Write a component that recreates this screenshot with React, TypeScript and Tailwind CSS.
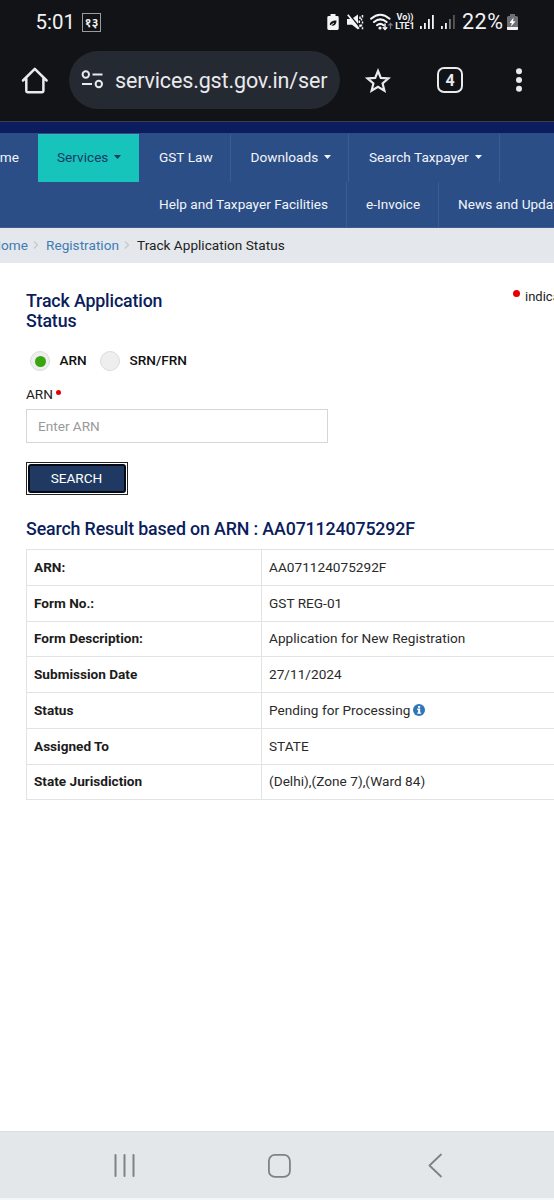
import type { ReactNode } from "react";

function StatusBar() {
  return (
    <div className="flex h-[44px] items-center text-[#f1f2f4]">
      <span className="ml-[35.500px] w-[46.500px] text-[20.5px] leading-6 whitespace-nowrap">5:01</span>
      <span className="flex h-[19px] w-[19px] items-center justify-center border border-[#9a9b9e] font-['Noto_Sans',sans-serif] text-[13px] leading-none font-semibold">
        १३
      </span>
      <svg className="ml-[226px] h-[20px] w-[12px]" viewBox="0 0 12 20" fill="none">
        <path d="M3.500 2h5v2h1.800q1.400 0 1.400 1.400v11.200q0 1.400-1.400 1.400H1.700q-1.400 0-1.400-1.400V5.400q0-1.400 1.400-1.400h1.800z" fill="#f4f4f5" />
        <path d="M3 13.500C2.300 10 5 8.500 9.500 8.500C9.500 13 7 14.500 4 13.200L7 10.800" fill="#111418" />
        <path d="M2.500 14.500L7 11" stroke="#f4f4f5" strokeWidth=".8" />
      </svg>
      <svg className="ml-[8px] h-[20px] w-[17px]" viewBox="0 0 17 20" fill="none">
        <path d="M0 7h4.500L11 2.500v15L5 12.800H0z" fill="#f4f4f5" />
        <path d="M1.500 1.500l11 13.500" stroke="#111418" strokeWidth="1.500" />
        <path d="M.8 2.800l11.200 14" stroke="#f4f4f5" strokeWidth="1.700" />
        <path d="M13 4.500v2.500M12.300 8.500v2.500M13 12.500v2.500M15.500 3v2.500M14.500 6.500v2M15.500 9.500v2M14.500 12.500v2M15.500 15.300v2" stroke="#f4f4f5" strokeWidth="1.500" />
      </svg>
      <svg className="ml-[6px] h-[20px] w-[23px]" viewBox="0 0 23 20" fill="none" stroke="#f4f4f5">
        <path d="M1 6.700q9.300-8 18.600 0M4 10q6.300-5.300 12.600 0M7 13.200q3.300-2.700 6.500 0" strokeWidth="2" strokeLinecap="round" />
        <circle cx="10" cy="16" r="1.600" fill="#f4f4f5" stroke="none" />
        <path d="M15 11.500v6M12.800 15.200l2.200 2.300 2.200-2.300" strokeWidth="1.500" />
        <path d="M20.500 17v-5.500M18.500 13.500l2-2.200 2 2.200" stroke="#77797c" strokeWidth="1.200" />
      </svg>
      <div className="ml-[2px] flex w-[20px] flex-col items-center text-[9px] leading-[9.500px] font-bold whitespace-nowrap">
        <span>Vo))</span>
        <span className="tracking-[-0.1px]">LTE1</span>
      </div>
      <svg className="ml-[5px] h-[20px] w-[15px]" viewBox="0 0 15 20" fill="#f4f4f5">
        <rect x="0" y="14" width="1.800" height="3" />
        <rect x="4" y="11" width="1.800" height="6" />
        <rect x="8" y="7" width="1.800" height="10" />
        <rect x="12" y="3" width="1.800" height="14" />
      </svg>
      <svg className="ml-[6px] h-[20px] w-[15px]" viewBox="0 0 15 20" fill="#f4f4f5">
        <rect x="0" y="14" width="1.800" height="3" />
        <rect x="4" y="11" width="1.800" height="6" />
        <rect x="8" y="7" width="1.800" height="10" fill="#77797c" />
        <rect x="12" y="3" width="1.800" height="14" fill="#54565a" />
      </svg>
      <span className="ml-[6px] w-[45px] text-[21.500px] leading-6 tracking-[0.500px] whitespace-nowrap">22%</span>
      <svg className="h-[20px] w-[11px]" viewBox="0 0 11 20">
        <path d="M3 2h5v2h1.500q1.500 0 1.500 1.500V17q0 1-1 1H1q-1 0-1-1V5.500Q0 4 1.500 4H3z" fill="#6e7073" />
        <path d="M0 15h11V17q0 1-1 1H1q-1 0-1-1z" fill="#f4f4f5" />
        <path d="M6.500 5.500L2.500 11h2.300L4 14.500 8.500 9.300H6z" fill="#fff" />
      </svg>
    </div>
  );
}

function BrowserBar() {
  return (
    <div className="flex h-[77px] items-start pt-[7px] text-[#e9eaed]">
      <svg className="mt-[14px] ml-[20px] h-[30px] w-[30px]" viewBox="0 0 30 30" fill="none" stroke="#e9eaed" strokeWidth="2.500" strokeLinejoin="round" strokeLinecap="round">
        <path d="M3 15.500L14.800 3.800 26.600 15.500M6.300 13.500V26q0 1.200 1.200 1.200h14.700q1.200 0 1.200-1.200V13.500" />
      </svg>
      <div className="ml-[19px] flex h-[58px] w-[271px] items-center rounded-full bg-[#252932]">
        <svg className="ml-[12px] h-[22px] w-[24px] shrink-0" viewBox="0 0 24 22" fill="none" stroke="#e9eaed" strokeWidth="2">
          <circle cx="4.800" cy="5.500" r="3.200" />
          <path d="M11.500 5.500h10M1 15h10" />
          <circle cx="17.800" cy="15" r="3.200" />
        </svg>
        <span className="mt-[2px] ml-[10px] text-[21.500px] leading-8 tracking-[-0.150px] whitespace-nowrap">services.gst.gov.in/ser</span>
      </div>
      <svg className="mt-[15px] ml-[25px] h-[30px] w-[28px]" viewBox="0 0 28 30" fill="none" stroke="#e9eaed" strokeWidth="2.200">
        <path d="M13 5l2.800 6.900 7.500.6-5.700 4.900 1.800 7.300-6.400-3.900-6.400 3.900 1.800-7.300-5.700-4.900 7.500-.6z" />
      </svg>
      <span className="mt-[16px] ml-[44px] flex h-[26px] w-[26px] items-center justify-center rounded-[7px] border-2 border-[#e9eaed] pt-px text-[16px] leading-none font-bold">4</span>
      <svg className="mt-[14px] ml-[52px] h-[30px] w-[8px]" viewBox="0 0 8 30" fill="#e9eaed">
        <circle cx="4" cy="6.300" r="3" />
        <circle cx="4" cy="15" r="3" />
        <circle cx="4" cy="23.700" r="3" />
      </svg>
    </div>
  );
}

function Caret() {
  return (
    <svg className="ml-[6px] h-[4px] w-[7px] shrink-0" viewBox="0 0 7 4" fill="currentColor">
      <path d="M0 0h7L3.500 4z" />
    </svg>
  );
}

function NavItem({ className, caret, children }: { className: string; caret?: boolean; children: ReactNode }) {
  return (
    <div className={`flex shrink-0 items-center whitespace-nowrap ${className}`}>
      <span>{children}</span>
      {caret && <Caret />}
    </div>
  );
}

function MainNav() {
  return (
    <nav className="h-[95px] shrink-0 overflow-hidden border-b border-[#3d5c92] bg-[#2c4e86] text-[13.600px] leading-5 tracking-[0.020px] text-[#f2f5fa]">
      <div className="flex h-[49px] pt-px">
        <div className="flex w-[38px] shrink-0 items-center justify-end overflow-hidden pr-[19px] pb-[2px]">Home</div>
        <NavItem className="w-[101px] border-t border-[#3cb9bd] bg-[#17c4bb] pb-[3px] pl-[19px] text-[#123a63]" caret>Services</NavItem>
        <NavItem className="w-[92px] border-r border-[#3d5c92] pb-[2px] pl-[20px]">GST Law</NavItem>
        <NavItem className="w-[118px] border-r border-[#3d5c92] pb-[2px] pl-[19.500px]" caret>Downloads</NavItem>
        <NavItem className="w-[151px] border-r border-[#3d5c92] pb-[2px] pl-[20px]" caret>Search Taxpayer</NavItem>
      </div>
      <div className="flex h-[45px] pl-[139px]">
        <NavItem className="w-[208px] border-r border-[#3d5c92] pb-[2px] pl-[20px]">Help and Taxpayer Facilities</NavItem>
        <NavItem className="w-[92px] border-r border-[#3d5c92] pb-[2px] pl-[19px]">e-Invoice</NavItem>
        <NavItem className="w-[160px] pb-[2px] pl-[19px]">News and Updates</NavItem>
      </div>
    </nav>
  );
}

function Chevron() {
  return (
    <svg className="mx-[5px] h-[8px] w-[8px] shrink-0" viewBox="0 0 8 8" fill="none" stroke="#c5c9cd" strokeWidth="1.300">
      <path d="M1 .5L4.500 4 1 7.500" />
    </svg>
  );
}

function Breadcrumb() {
  return (
    <div className="flex h-[35px] shrink-0 items-center overflow-hidden bg-[#e4e7eb] pb-px text-[13.600px] leading-5 tracking-[0.020px] whitespace-nowrap text-[#3f7db5]">
      <span className="flex w-[28px] shrink-0 justify-end">Home</span>
      <Chevron />
      <span className="w-[73px]">Registration</span>
      <Chevron />
      <span className="text-[#222]">Track Application Status</span>
    </div>
  );
}

function Radio({ checked, label, className }: { checked?: boolean; label: string; className: string }) {
  return (
    <label className={`flex items-center ${className}`}>
      <span className="flex h-[20px] w-[20px] items-center justify-center rounded-full border border-[#dcdcdc] bg-[#eeeeee]">
        {checked && <span className="h-[11px] w-[11px] rounded-full bg-[#3aa60f]" />}
      </span>
      <span className="mb-[2px] ml-[9.500px] font-medium whitespace-nowrap text-[#111]">{label}</span>
    </label>
  );
}

const rows = [
  { label: "ARN:", value: "AA071124075292F" },
  { label: "Form No.:", value: "GST REG-01" },
  { label: "Form Description:", value: "Application for New Registration" },
  { label: "Submission Date", value: "27/11/2024" },
  { label: "Status", value: "Pending for Processing", info: true },
  { label: "Assigned To", value: "STATE" },
  { label: "State Jurisdiction", value: "(Delhi),(Zone 7),(Ward 84)" },
];

function InfoIcon() {
  return (
    <svg className="ml-[3px] h-[12px] w-[12px]" viewBox="0 0 12 12">
      <circle cx="6" cy="6" r="6" fill="#2f76b8" />
      <path d="M5 2h2.200v1.700H5zM4.200 4.600h3v3.800h.9v1.300H4.200V8.400h.9V5.900h-.9z" fill="#fff" />
    </svg>
  );
}

function ResultTable() {
  return (
    <div className="ml-[26px] w-[528px] border-t border-l border-[#e3e3e3]">
      {rows.map((row) => (
        <div key={row.label} className="flex h-[35.750px] border-b border-[#e3e3e3]">
          <div className="flex w-[235px] shrink-0 items-center border-r border-[#e3e3e3] pb-px pl-[7px] font-bold text-[#1c1c1c]">{row.label}</div>
          <div className="flex items-center pb-px pl-[7px] tracking-[0.030px] whitespace-nowrap text-[#2a2a2a]">
            {row.value}
            {row.info && <InfoIcon />}
          </div>
        </div>
      ))}
    </div>
  );
}

export default function App() {
  return (
    <div className="flex h-[1200px] w-[554px] flex-col overflow-hidden bg-white font-[Roboto,sans-serif]">
      <header className="h-[121px] shrink-0 bg-[#111317]">
        <StatusBar />
        <BrowserBar />
      </header>
      <div className="h-[12px] shrink-0 border-t border-[#3b3f49] bg-[#0b1d5c]" />
      <MainNav />
      <Breadcrumb />
      <main className="flex-1 text-[13.600px] leading-5">
        <div className="flex h-[84px] items-start justify-between pt-[28px] pl-[26px]">
          <h1 className="w-[160px] text-[17.800px] leading-[20px] font-medium tracking-[-0.140px] text-[#0b1d5c]">Track Application Status</h1>
          <div className="mt-[-5px] flex w-[41px] items-start overflow-hidden text-[13px] whitespace-nowrap text-[#222]">
            <span className="mt-[4px] mr-[5px] h-[7px] w-[7px] shrink-0 rounded-full bg-[#e80000]" />
            <span className="mt-px">indicates mandatory fields</span>
          </div>
        </div>
        <div className="flex h-[28px] items-center">
          <Radio checked label="ARN" className="ml-[30px] w-[70px]" />
          <Radio label="SRN/FRN" className="w-[100px]" />
        </div>
        <div className="mt-[9px] ml-[26px] flex h-[21px] items-start text-[#222]">
          ARN
          <span className="mt-[6px] ml-[3px] h-[5px] w-[5px] rounded-full bg-[#e80000]" />
        </div>
        <div className="mt-[4px] ml-[26px] flex h-[34px] w-[302px] items-center border border-[#d6d6d6] pl-[11px] text-[#999]">Enter ARN</div>
        <div className="mt-[19px] ml-[26px] h-[33px] w-[102px] border border-[#222] bg-white p-px">
          <button className="flex h-full w-full items-center justify-center rounded-[3px] border-2 border-[#050a14] bg-[#1f3962] pr-px pb-[2px] text-white">SEARCH</button>
        </div>
        <h2 className="mt-[22px] mb-[9px] ml-[26px] text-[17.800px] leading-[23px] font-medium tracking-[-0.140px] whitespace-nowrap text-[#0b1d5c]">Search Result based on ARN : AA071124075292F</h2>
        <ResultTable />
      </main>
      <footer className="flex h-[67px] shrink-0 items-center border-t border-[#dcdfe1] bg-[#e3e7ea]">
        <svg className="ml-[113px] h-[26px] w-[24px]" viewBox="0 0 24 26" stroke="#7d8285" strokeWidth="2" strokeLinecap="round">
          <path d="M2.500 3v21M11.500 3v21M20.500 3v21" />
        </svg>
        <svg className="ml-[130px] h-[26px] w-[24px]" viewBox="0 0 24 26" fill="none" stroke="#7d8285" strokeWidth="1.800">
          <rect x="1.900" y="2.900" width="21" height="22" rx="6" />
        </svg>
        <svg className="ml-[136px] h-[26px] w-[16px]" viewBox="0 0 16 26" fill="none" stroke="#7d8285" strokeWidth="1.800" strokeLinecap="round" strokeLinejoin="round">
          <path d="M14 2.500L2.500 13.500l11.500 11" />
        </svg>
      </footer>
      <div className="h-[2px] shrink-0 bg-[#f4f5f6]" />
    </div>
  );
}
